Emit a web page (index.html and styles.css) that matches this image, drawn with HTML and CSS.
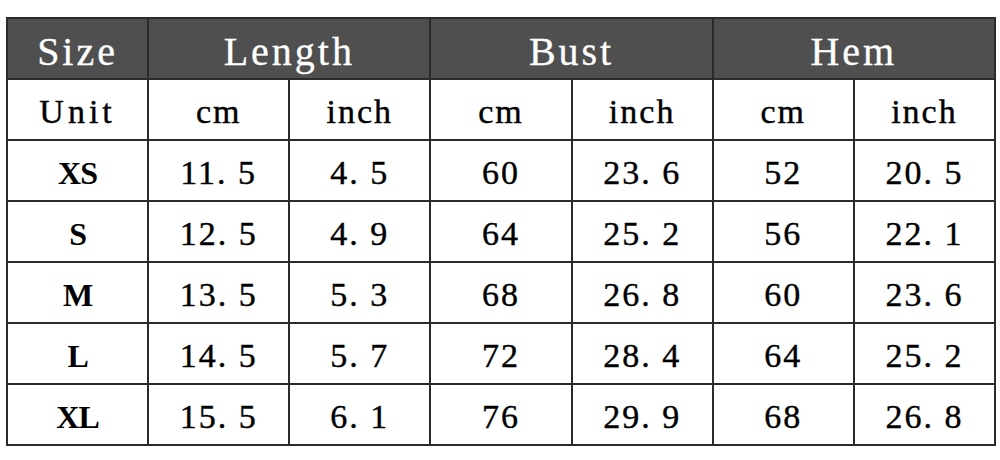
FILE: index.html
```html
<!DOCTYPE html>
<html lang="en">

<head>
    <meta charset="UTF-8">
    <meta name="viewport" content="width=device-width, initial-scale=1.0">
    <title>Size Chart</title>
    <link rel="stylesheet" href="styles.css">
</head>

<body>
    <table class="size-chart">
        <!-- Cabecera -->
        <tr class="head">
            <th>Size</th>
            <th colspan="2">Length</th>
            <th colspan="2">Bust</th>
            <th colspan="2">Hem</th>
        </tr>
        <tr class="units">
            <td class="unit">Unit</td>
            <td>cm</td>
            <td>inch</td>
            <td>cm</td>
            <td>inch</td>
            <td>cm</td>
            <td>inch</td>
        </tr>

        <!-- Tallas -->
        <tr>
            <td class="size">XS</td>
            <td>11. 5</td>
            <td>4. 5</td>
            <td>60</td>
            <td>23. 6</td>
            <td>52</td>
            <td>20. 5</td>
        </tr>
        <tr>
            <td class="size">S</td>
            <td>12. 5</td>
            <td>4. 9</td>
            <td>64</td>
            <td>25. 2</td>
            <td>56</td>
            <td>22. 1</td>
        </tr>
        <tr>
            <td class="size">M</td>
            <td>13. 5</td>
            <td>5. 3</td>
            <td>68</td>
            <td>26. 8</td>
            <td>60</td>
            <td>23. 6</td>
        </tr>
        <tr>
            <td class="size">L</td>
            <td>14. 5</td>
            <td>5. 7</td>
            <td>72</td>
            <td>28. 4</td>
            <td>64</td>
            <td>25. 2</td>
        </tr>
        <tr>
            <td class="size">XL</td>
            <td>15. 5</td>
            <td>6. 1</td>
            <td>76</td>
            <td>29. 9</td>
            <td>68</td>
            <td>26. 8</td>
        </tr>
    </table>
</body>

</html>
```

FILE: styles.css
```css
/* General */
body {
    margin: 0;
    padding: 0;
    background: #fff;
    color: #000;
}

.size-chart {
    width: 990px;
    margin: 17px 0 0 6px;
    border-collapse: collapse;
    table-layout: fixed;
    border: 2px solid #2b2b2b;
}

.size-chart tr {
    height: 61px;
}

.size-chart th,
.size-chart td {
    padding: 5px 0 0 0;
    border: 2px solid #2b2b2b;
    text-align: center;
    white-space: pre;
    line-height: 54px;
    font-family: "Liberation Serif", "DejaVu Serif", serif;
    font-size: 34px;
    font-weight: normal;
    letter-spacing: 2px;
    -webkit-text-stroke: 0.4px #000;
}

.size-chart .head th {
    background: #4f4f4f;
    color: #fff;
    font-size: 40px;
    letter-spacing: 3px;
    line-height: 52px;
    padding-top: 7px;
    -webkit-text-stroke: 0.3px #fff;
}

.size-chart .unit {
    letter-spacing: 4px;
}

.size-chart .size {
    font-weight: bold;
    letter-spacing: -1px;
    font-size: 32px;
    -webkit-text-stroke: 0;
}
```
